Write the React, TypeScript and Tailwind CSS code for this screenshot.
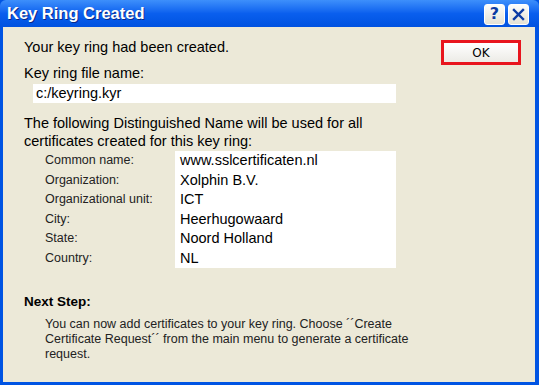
import React from 'react';

const FIELDS = [
  { label: 'Common name:', value: 'www.sslcertificaten.nl' },
  { label: 'Organization:', value: 'Xolphin B.V.' },
  { label: 'Organizational unit:', value: 'ICT' },
  { label: 'City:', value: 'Heerhugowaard' },
  { label: 'State:', value: 'Noord Holland' },
  { label: 'Country:', value: 'NL' },
];

const TitleButton: React.FC<{ children: React.ReactNode }> = ({ children }) => (
  <div className="w-[21px] h-[21px] rounded-[3px] border border-white bg-gradient-to-b from-[#fdfdfb] to-[#e4e1d4] flex items-center justify-center text-[#0c3ba4]">
    {children}
  </div>
);

const App: React.FC = () => {
  return (
    <div className="w-[539px] h-[385px] flex flex-col bg-[#0054e3] font-['Liberation_Sans',Arial,sans-serif] overflow-hidden">
      {/* title bar */}
      <div className="h-[27px] shrink-0 flex items-center justify-between pl-[7px] pr-[10px] bg-gradient-to-b from-[#3d8ffb] via-[#0a5fee] to-[#0052e0] rounded-t-[6px]">
        <span className="text-white font-bold text-[16.5px] leading-none [text-shadow:1px_1px_0_#0a2a8a]">Key Ring Created</span>
        <div className="flex items-center gap-[3px] mt-[1px]">
          <TitleButton>
            <span className="font-bold text-[16px] leading-none font-['DejaVu_Sans',sans-serif]">?</span>
          </TitleButton>
          <TitleButton>
            <svg width="13" height="13" viewBox="0 0 13 13">
              <path d="M2 2 L11 11 M11 2 L2 11" stroke="#0c3ba4" strokeWidth="2.4" strokeLinecap="square" />
            </svg>
          </TitleButton>
        </div>
      </div>

      {/* body */}
      <div className="flex-1 ml-[3px] mr-[4px] mb-[3px] bg-[#ece9d8] flex text-black">
        <div className="flex-1 pl-[21px] pt-[12px] text-[14.5px]">
          <div className="h-[16px] leading-[16px]">Your key ring had been created.</div>
          <div className="h-[16px] leading-[16px] mt-[10px]">Key ring file name:</div>
          <div className="mt-[3px] ml-[9px] w-[363px] h-[19px] bg-white pl-[3px] leading-[19px]">c:/keyring.kyr</div>
          <div className="mt-[11px] leading-[18px]">
            The following Distinguished Name will be used for all
            <br />
            certificates created for this key ring:
          </div>
          <div className="mt-[1px] flex">
            <div className="w-[151px] pl-[21px] text-[12.5px] text-[#222]">
              {FIELDS.map(f => (
                <div key={f.label} className="h-[19.5px] leading-[19.5px]">{f.label}</div>
              ))}
            </div>
            <div className="w-[221px] bg-white pl-[5px]">
              {FIELDS.map(f => (
                <div key={f.label} className="h-[19.5px] leading-[19.5px]">{f.value}</div>
              ))}
            </div>
          </div>
          <div className="mt-[26px] h-[16px] leading-[16px] font-bold text-[13.5px]">Next Step:</div>
          <div className="mt-[7px] ml-[21px] text-[12.5px] leading-[15px] text-[#222]">
            You can now add certificates to your key ring. Choose ´´Create
            <br />
            Certificate Request´´ from the main menu to generate a certificate
            <br />
            request.
          </div>
        </div>
        <div className="pt-[13px] pr-[14px]">
          <div className="w-[80px] h-[25px] border-[3px] border-[#e8151d] bg-gradient-to-b from-white to-[#ecebe6] flex items-center justify-center text-[12px] font-['DejaVu_Sans',sans-serif]">
            OK
          </div>
        </div>
      </div>
    </div>
  );
};

export default App;
